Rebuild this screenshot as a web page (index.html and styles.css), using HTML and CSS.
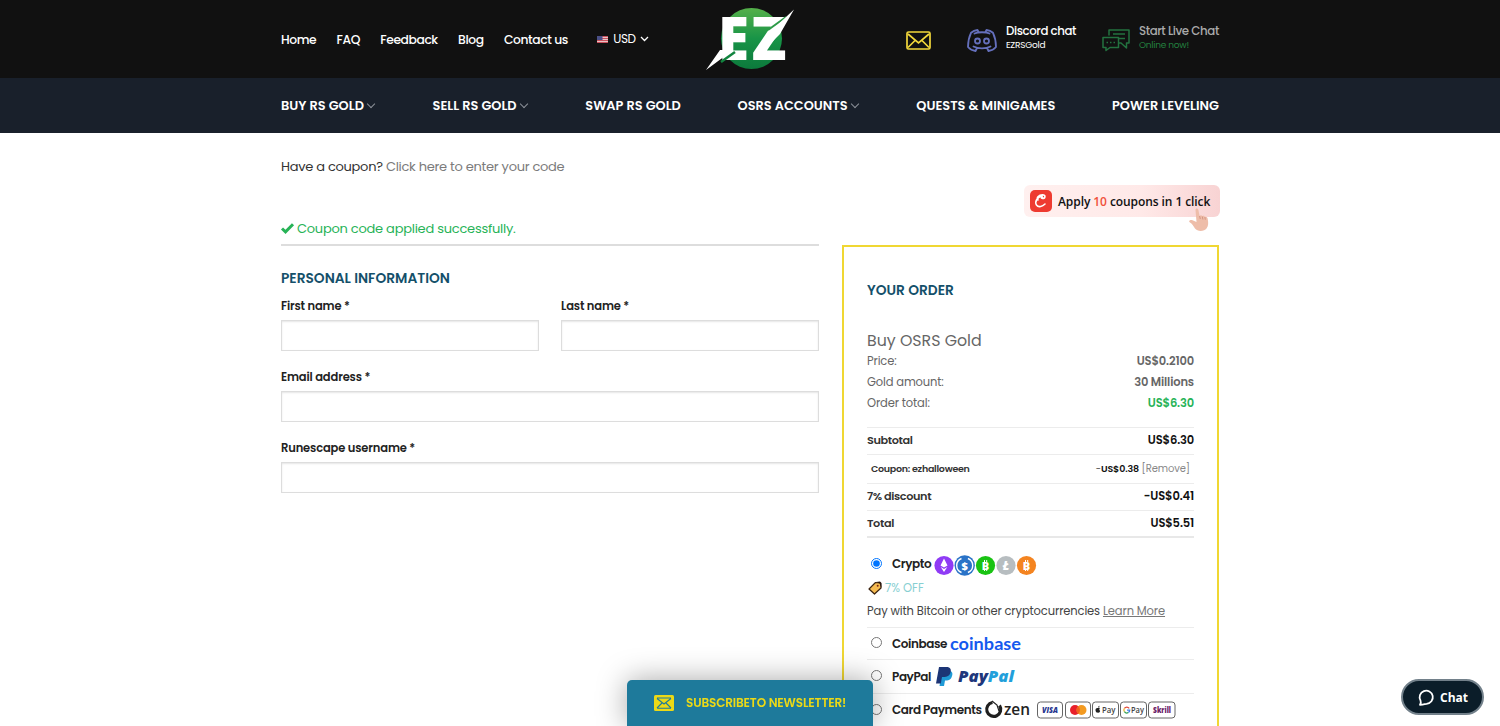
FILE: index.html
```html
<!DOCTYPE html>
<html lang="en">

<head>
    <meta charset="UTF-8">
    <meta name="viewport" content="width=device-width, initial-scale=1.0">
    <title>Checkout - EZ RS Gold</title>
    <link rel="stylesheet" href="styles.css">
</head>

<body>
    <header class="top">
        <div class="container top-row">
            <nav class="top-menu">
                <a>Home</a>
                <a>FAQ</a>
                <a>Feedback</a>
                <a>Blog</a>
                <a>Contact us</a>
                <span class="currency">
                    <svg class="flag" width="11" height="7" viewBox="0 0 11 7">
                        <rect width="11" height="7" fill="#e9c3c6" />
                        <path d="M0 .5h11M0 2.5h11M0 4.5h11M0 6.5h11" stroke="#c9505c" />
                        <rect width="5.5" height="4" fill="#4a4f86" />
                    </svg>
                    <span class="usd">USD</span>
                    <svg width="9" height="6" viewBox="0 0 9 6" fill="none" stroke="#fff" stroke-width="1.3">
                        <path d="M1 1l3.5 3.5L8 1" />
                    </svg>
                </span>
            </nav>
            <svg class="logo" width="90" height="64" viewBox="0 0 90 64">
                <defs>
                    <linearGradient id="ball" x1="0" y1="0" x2="0" y2="1">
                        <stop offset="0" stop-color="#55b04a" />
                        <stop offset=".5" stop-color="#189447" />
                        <stop offset="1" stop-color="#0c7a3c" />
                    </linearGradient>
                </defs>
                <circle cx="45.5" cy="30.5" r="30.5" fill="url(#ball)" />
                <text class="logo-text" y="52" x="12" textLength="31" lengthAdjust="spacingAndGlyphs">E</text>
                <text class="logo-text" y="52" x="45.5" textLength="35" lengthAdjust="spacingAndGlyphs">Z</text>
                <path d="M80 9L62 22" stroke="#2b9a47" stroke-width="2" />
                <path d="M15 54l14-10" stroke="#12843f" stroke-width="2.500" />
                <path d="M88 1.500L74 26l-12 12 2-14z M0 62l14-20h9l-4 6z" fill="#fff" />
            </svg>
            <div class="contacts">
                <svg class="mail" width="25" height="19" viewBox="0 0 25 19" fill="none" stroke="#f2d83b" stroke-width="1.7">
                    <rect x="1" y="1" width="23" height="17" rx="1.5" />
                    <path d="M2 3l10.500 9L23 3M2 16.500l7-7M23 16.500l-7-7" />
                </svg>
                <div class="contact discord">
                    <svg width="30" height="23" viewBox="0 0 30 23" fill="none" stroke="#6570bd" stroke-width="1.8" stroke-linecap="round" stroke-linejoin="round">
                        <path d="M7.500 4.500C11 2.800 19 2.800 22.500 4.500M11.500 3L10.500 1C7.500 1.300 5.500 2.500 4 3.800 2 8 1 13 1 18c2 2.300 5 3.700 7.500 4l1.500-3M18.500 3l1-2c3 .3 5 1.500 6.500 2.800 2 4.200 3 9.200 3 14.200-2 2.300-5 3.700-7.500 4L20 19M6.500 17.500c4.500 2.600 12.500 2.600 17 0" />
                        <circle cx="10.5" cy="12" r="2.5" />
                        <circle cx="19.5" cy="12" r="2.5" />
                    </svg>
                    <div>
                        <b>Discord chat</b>
                        <small>EZRSGold</small>
                    </div>
                </div>
                <div class="contact live">
                    <svg width="28" height="22" viewBox="0 0 28 22" fill="none" stroke="#23723f" stroke-width="1.5" stroke-linejoin="round">
                        <path d="M7 6.500V1h20v13h-2.500v5L19 14h-2M11 5h12M17 9.500h6" />
                        <path d="M1 8.500h15.500v10H8l-4 3v-3H1z" />
                        <path d="M4.500 13.500h9" stroke-dasharray="1.5 2" />
                    </svg>
                    <div>
                        <b>Start Live Chat</b>
                        <small>Online now!</small>
                    </div>
                </div>
            </div>
        </div>
    </header>

    <nav class="main-menu">
        <div class="container main-row">
            <a class="drop">BUY RS GOLD</a>
            <a class="drop">SELL RS GOLD</a>
            <a>SWAP RS GOLD</a>
            <a class="drop">OSRS ACCOUNTS</a>
            <a>QUESTS &amp; MINIGAMES</a>
            <a>POWER LEVELING</a>
        </div>
    </nav>

    <main class="container">
        <p class="have-coupon">Have a coupon? <a>Click here to enter your code</a></p>

        <div class="columns">
            <form class="billing">
                <p class="message">
                    <svg width="13" height="11" viewBox="0 0 13 11" fill="none" stroke="#27b357" stroke-width="3">
                        <path d="M1 5.500l3.500 3.300L12 1.300" />
                    </svg>
                    <span>Coupon code applied successfully.</span>
                </p>
                <h3>PERSONAL INFORMATION</h3>
                <div class="fields">
                    <label class="half"><span>First name *</span><input type="text"></label>
                    <label class="half"><span>Last name *</span><input type="text"></label>
                    <label><span>Email address *</span><input type="text"></label>
                    <label><span>Runescape username *</span><input type="text"></label>
                </div>
            </form>

            <aside class="side">
                <div class="apply">
                    <span class="apply-icon">
                        <svg width="16" height="16" viewBox="0 0 16 16" fill="none" stroke="#fff" stroke-width="1.6" stroke-linecap="round">
                            <path d="M5 7C3 4.500 6 2 9.500 1.800 13 1.800 12.500 5.500 9.500 5.500 8 5.500 8.300 3.800 9.300 4M9 3C4 4 1.500 9 3.500 12c2 2.800 6 1.500 8.500-1" />
                        </svg>
                    </span>
                    <span class="apply-text">Apply <i>10</i> coupons in 1 click</span>
                    <svg class="hand" width="24" height="25" viewBox="0 0 24 25">
                        <path d="M7.500 2c0-2 2.500-2 2.900 0l1.200 6c1-1.200 2.300-.8 2.700.3 1-.9 2.300-.5 2.600.7 1.500-.8 2.600.2 2.800 2 .8 4 .8 7-1.200 9.500-2 3-9 3.500-11.500 0C5.500 18 4 15.500 2 14.500c-2-1 0-3.200 2.500-2.200l4 1.700z" fill="#eebda9" />
                        <path d="M11.600 8l.7 3M14.300 8.500l.6 3M16.900 9l.4 2.700" stroke="#cf8b7a" stroke-width=".8" fill="none" />
                    </svg>
                </div>

                <section class="order">
                    <h3>YOUR ORDER</h3>
                    <h4>Buy OSRS Gold</h4>
                    <div class="line"><span>Price:</span><b>US$0.2100</b></div>
                    <div class="line"><span>Gold amount:</span><b>30 Millions</b></div>
                    <div class="line"><span>Order total:</span><b class="green">US$6.30</b></div>

                    <div class="totals">
                        <div class="total-row"><b>Subtotal</b><strong>US$6.30</strong></div>
                        <div class="total-row coupon"><b>Coupon: ezhalloween</b><span>-<strong>US$0.38</strong> <a>[Remove]</a></span></div>
                        <div class="total-row"><b>7% discount</b><strong>-US$0.41</strong></div>
                        <div class="total-row"><b>Total</b><strong>US$5.51</strong></div>
                    </div>

                    <div class="pay crypto">
                        <input type="radio" name="pay" checked>
                        <b>Crypto</b>
                        <svg class="coins" width="104" height="21" viewBox="0 0 104 21">
                            <circle cx="10" cy="10.5" r="9.6" fill="#8f3bf5" />
                            <path d="M10 3.500l3.500 7-3.500 2-3.500-2zM6.700 12l3.300 2 3.300-2-3.300 5z" fill="#fff" />
                            <circle cx="30.7" cy="10.5" r="10.2" fill="#2a73c7" />
                            <path d="M27.500 3.500a7.500 7.500 0 0 0 0 14M33.900 3.500a7.500 7.500 0 0 1 0 14" fill="none" stroke="#fff" stroke-width="1.4" />
                            <text x="30.7" y="14.5" font-size="11">$</text>
                            <circle cx="51.5" cy="10.5" r="9.6" fill="#19c313" />
                            <text x="51.5" y="14.5" font-size="11">B</text>
                            <path d="M50.500 5v2M52.700 5v2M50.500 14v2M52.700 14v2" stroke="#fff" />
                            <circle cx="72" cy="10.5" r="9.6" fill="#b7bdc0" />
                            <text x="72" y="14.8" font-size="12" font-style="italic">Ł</text>
                            <circle cx="92.5" cy="10.5" r="9.6" fill="#f48420" />
                            <text x="92.5" y="14.5" font-size="11">B</text>
                            <path d="M91.500 5v2M93.700 5v2M91.500 14v2M93.700 14v2" stroke="#fff" />
                        </svg>
                    </div>
                    <div class="off">
                        <svg width="14" height="14" viewBox="0 0 14 14">
                            <path d="M7.500 1.500l5 .5.5 5-6.500 6L1 8z" fill="#f5bb51" stroke="#3c2411" stroke-width="1.2" stroke-linejoin="round" />
                            <path d="M8 1l4-.5 1.500 1.500v5l-1.800-4.500z" fill="#2a1710" />
                            <circle cx="9.7" cy="4.7" r="1" fill="#7a2b16" />
                        </svg>
                        <span>7% OFF</span>
                    </div>
                    <p class="pay-note">Pay with Bitcoin or other cryptocurrencies <a>Learn More</a></p>

                    <div class="pay ruled coinbase-row">
                        <input type="radio" name="pay">
                        <b>Coinbase</b>
                        <svg class="brand" width="72" height="20" viewBox="0 0 72 20">
                            <text class="coinbase" x="0" y="16" textLength="71" lengthAdjust="spacingAndGlyphs">coinbase</text>
                        </svg>
                    </div>
                    <div class="pay ruled paypal-row">
                        <input type="radio" name="pay">
                        <b>PayPal</b>
                        <svg class="brand paypal-brand" width="80" height="21" viewBox="0 0 80 21">
                            <path d="M6 5h7c3 0 4 2 3 5-1 3.500-3 4.500-6 4.500H9L8 20H3.500z" fill="#1f9ad6" />
                            <path d="M3 1h7.500c4 0 5 2.500 4 5.500-1 3.500-3.500 4.500-7 4.500H6l-1.200 6.500H0z" fill="#1c3576" />
                            <text class="paypal" x="22" y="16" textLength="56" lengthAdjust="spacingAndGlyphs"><tspan fill="#20367b">Pay</tspan><tspan fill="#229fdb">Pal</tspan></text>
                        </svg>
                    </div>
                    <div class="pay ruled card-row">
                        <input type="radio" name="pay">
                        <b>Card Payments</b>
                        <svg class="brand zen-brand" width="192" height="20" viewBox="0 0 192 20">
                            <path d="M7.500 2.500a7 7 0 1 0 7 3" fill="none" stroke="#1f1f1f" stroke-width="3.2" />
                            <path d="M7 1l5 4 2 6" fill="none" stroke="#1f1f1f" stroke-width="1.2" />
                            <text class="zen" x="19" y="15" textLength="26" lengthAdjust="spacingAndGlyphs">zen</text>
                            <g class="cards">
                                <rect x="52.5" y="2" width="25" height="16" rx="3" />
                                <rect x="80.5" y="2" width="25" height="16" rx="3" />
                                <rect x="107.5" y="2" width="26" height="16" rx="3" />
                                <rect x="135.5" y="2" width="26" height="16" rx="3" />
                                <rect x="163.5" y="2" width="26.5" height="16" rx="3" />
                            </g>
                            <text class="visa" x="57" y="13" textLength="16" lengthAdjust="spacingAndGlyphs">VISA</text>
                            <circle cx="90" cy="10" r="5" fill="#e8202b" />
                            <circle cx="96.5" cy="10" r="5" fill="#f39a20" />
                            <path d="M93.200 6.200a5 5 0 0 1 0 7.600 5 5 0 0 1 0-7.600z" fill="#f2601f" />
                            <path d="M113 8c1-.5 1.700-.2 2 .1-1 .8-.8 2.300.2 2.800-.6 1.500-1.200 2-2.300 1.700-1.500.4-2.400-1-2.400-2.600s1.200-2.400 2.500-2zm.2-.6c0-1 .6-1.500 1.300-1.700 0 1-.5 1.600-1.300 1.700z" fill="#222" />
                            <text class="wallet" x="117" y="12.8" textLength="13.5" lengthAdjust="spacingAndGlyphs">Pay</text>
                            <g fill="none" stroke-width="1.3">
                                <path d="M144.200 8.300a2.900 2.900 0 0 0-4.800 0" stroke="#e04a3a" />
                                <path d="M139.400 8.300a3 3 0 0 0 0 3.400" stroke="#efb62d" />
                                <path d="M139.400 11.700a2.900 2.900 0 0 0 4 .7" stroke="#3ba457" />
                                <path d="M143.400 12.400c1-.5 1.300-1.200 1.300-2.200H142" stroke="#4180e8" />
                            </g>
                            <text class="wallet" x="146" y="12.8" textLength="13" lengthAdjust="spacingAndGlyphs">Pay</text>
                            <text class="skrill" x="168" y="13" textLength="18" lengthAdjust="spacingAndGlyphs">Skrill</text>
                        </svg>
                    </div>
                </section>
            </aside>
        </div>
    </main>

    <div class="subscribe">
        <svg width="20" height="16" viewBox="0 0 20 16">
            <rect width="20" height="16" rx="1.5" fill="#ecd916" />
            <path d="M3 3.500l7 5.500 7-5.500M3 13l5-5M17 13l-5-5M3 3h14M3 13.300h14" fill="none" stroke="#1e7a9b" stroke-width="1.1" />
        </svg>
        <span>SUBSCRIBETO NEWSLETTER!</span>
    </div>

    <div class="chat">
        <svg width="16" height="17" viewBox="0 0 16 17" fill="none" stroke="#fff" stroke-width="1.8" stroke-linejoin="round">
            <path d="M2.500 11.500A6.600 6.600 0 1 1 8.500 14.800c-1.500 0-2 .6-6.500 1 1-1.600 1.200-2.700.5-4.300z" />
        </svg>
        <span>Chat</span>
    </div>
</body>

</html>
```
FILE: styles.css
```css
* {
    box-sizing: border-box;
}

body {
    display: flex;
    flex-direction: column;
    margin: 0;
    height: 726px;
    overflow: hidden;
    background: #fff;
    color: #333;
    font-family: 'Poppins', 'Inter', 'Liberation Sans', sans-serif;
    font-size: 12px;
}

h3, h4, p {
    margin: 0;
}

a, span, b, strong, small, h3, h4, p {
    white-space: nowrap;
}

svg {
    flex: none;
    overflow: visible;
    letter-spacing: 0;
}

.container {
    width: 938px;
    margin: 0 auto;
}

/* header */
.top {
    flex: none;
    height: 78px;
    background: #111;
    color: #fff;
}

.top-row {
    display: flex;
    height: 78px;
}

.top-menu {
    display: flex;
    align-items: center;
    gap: 20.3px;
    width: 425px;
    padding-top: 1px;
    font-size: 12.3px;
    font-weight: 500;
    letter-spacing: -.4px;
}

.currency {
    display: flex;
    align-items: center;
    margin-left: 9px;
    padding-bottom: 1px;
    font-size: 12px;
    font-weight: 400;
}

.usd {
    margin: 0 4px 0 5px;
}

.logo {
    margin-top: 8px;
}

.logo-text {
    font-family: 'Open Sans', sans-serif;
    font-size: 60px;
    font-weight: 800;
    fill: #fff;
}

.contacts {
    display: flex;
    flex: 1;
    justify-content: flex-end;
}

.mail {
    margin: 31px 36px 0 0;
}

.contact {
    display: flex;
    padding-top: 24px;
}

.contact svg {
    margin: 5px 9px 0 0;
}

.contact b, .contact small {
    display: block;
    line-height: 15px;
}

.contact b {
    font-size: 11.8px;
    font-weight: 500;
    letter-spacing: -.42px;
}

.contact small {
    font-size: 9px;
    letter-spacing: -.25px;
    line-height: 13px;
}

.discord {
    width: 135px;
}

.live {
    width: 117px;
    color: #aaa;
}

.live small {
    color: #23803f;
}

.main-menu {
    flex: none;
    height: 55px;
    background: #19202b;
}

.main-row {
    display: flex;
    justify-content: space-between;
    align-items: center;
    height: 55px;
    color: #fff;
    font-size: 12.9px;
    font-weight: 600;
}

.drop::after {
    content: '';
    display: inline-block;
    width: 5px;
    height: 5px;
    margin: 0 2px 3px 4px;
    border: solid #8b9098;
    border-width: 0 1.5px 1.5px 0;
    transform: rotate(45deg);
}

/* checkout */
main {
    flex: 1;
    min-height: 0;
}

.have-coupon {
    padding-top: 22px;
    height: 52px;
    font-size: 13px;
    letter-spacing: -.28px;
    line-height: 24px;
}

.have-coupon a {
    color: #7b7b7b;
}

.columns {
    display: flex;
    justify-content: space-between;
}

.billing {
    width: 538px;
    padding-top: 32px;
}

.message {
    display: flex;
    align-items: center;
    gap: 3px;
    height: 29px;
    padding-bottom: 4px;
    border-bottom: 2px solid #ddd;
    color: #27b357;
    font-size: 13px;
    letter-spacing: -.25px;
}

h3 {
    color: #14506a;
    font-size: 13.75px;
    font-weight: 600;
    line-height: 20px;
}

.billing h3 {
    margin-top: 23px;
}

.fields {
    display: flex;
    flex-wrap: wrap;
    column-gap: 22px;
    padding-top: 7px;
}

.fields label {
    width: 100%;
    height: 71px;
    color: #222;
    font-size: 11.5px;
    font-weight: 600;
    letter-spacing: -.15px;
}

.fields .half {
    width: 258px;
}

.fields label span {
    display: block;
    height: 24px;
    line-height: 21px;
}

.fields input {
    display: block;
    width: 100%;
    height: 31px;
    border: 1px solid #ddd;
    box-shadow: inset 0 1px 2px rgba(0, 0, 0, .1);
}

.side {
    width: 377px;
}

.apply {
    position: relative;
    display: flex;
    align-items: center;
    width: 196px;
    height: 32px;
    margin: 0 -1px 28px auto;
    padding-left: 6px;
    border-radius: 6px;
    background: linear-gradient(90deg, #fff0ef, #ffe9e8 60%, #f8d3d3);
    color: #111;
    font-family: 'Open Sans', sans-serif;
    font-size: 12px;
    font-weight: 600;
    letter-spacing: -.08px;
}

.apply i {
    color: #f0503a;
    font-style: normal;
}

.apply-icon {
    width: 22px;
    height: 22px;
    margin-right: 6px;
    padding: 3px;
    border-radius: 5px;
    background: #ee3b31;
}

.hand {
    position: absolute;
    right: 8px;
    top: 23px;
}

.order {
    height: 481px;
    overflow: hidden;
    padding: 34px 23px 0;
    border: 2px solid #f0d733;
    border-bottom: 0;
}

.order h4 {
    margin-top: 30px;
    color: #666;
    font-size: 15.8px;
    font-weight: 400;
    line-height: 20px;
}

.line {
    display: flex;
    justify-content: space-between;
    color: #666;
    font-size: 11.5px;
    letter-spacing: -.14px;
    line-height: 21px;
}

.line b {
    font-weight: 600;
}

.line .green {
    color: #27b357;
}

.totals {
    margin-top: 13px;
    border-bottom: 2px solid #e8e8e8;
}

.total-row {
    display: flex;
    justify-content: space-between;
    height: 27px;
    border-top: 1px solid #ececec;
    color: #333;
    font-size: 11.5px;
    line-height: 24px;
}

.total-row:last-child {
    height: 26px;
}

.total-row b {
    font-size: 11.3px;
    font-weight: 600;
    letter-spacing: -.4px;
}

.total-row strong {
    color: #111;
    font-weight: 600;
    letter-spacing: -.15px;
}

.coupon {
    height: 29px;
    padding: 0 4px;
    font-size: 9.5px;
    line-height: 27px;
}

.coupon b {
    font-size: 9.5px;
    letter-spacing: -.27px;
}

.coupon a {
    color: #888;
    font-size: 10px;
    letter-spacing: -.1px;
}

.pay {
    display: flex;
    align-items: center;
    height: 33px;
    color: #222;
    font-size: 12px;
}

.pay b {
    font-weight: 600;
    letter-spacing: -.42px;
}

.pay input {
    width: 11px;
    height: 11px;
    margin: 0 10px 2px 4px;
}

.ruled {
    border-top: 1px solid #ececec;
}

.crypto {
    height: 24px;
    margin-top: 14px;
}

.coins {
    margin: 3px 0 0 3px;
}

.coins text {
    fill: #fff;
    font-family: 'Open Sans', sans-serif;
    font-weight: 800;
    text-anchor: middle;
}

.off {
    display: flex;
    align-items: center;
    gap: 3px;
    height: 24px;
    padding-left: 1px;
    color: #87cfd2;
    font-size: 11.5px;
}

.pay-note {
    height: 27px;
    color: #444;
    font-size: 11.5px;
    letter-spacing: -.12px;
    line-height: 23px;
}

.pay-note a {
    color: #777;
    text-decoration: underline;
}

.brand {
    margin: 0 0 0 3px;
}

.coinbase-row {
    height: 32px;
}

.coinbase {
    fill: #1459ee;
    font-family: 'Lato', sans-serif;
    font-size: 17.5px;
    font-weight: 700;
}

.paypal-row {
    height: 34px;
}

.paypal {
    font-family: 'Open Sans', sans-serif;
    font-size: 16px;
    font-style: italic;
    font-weight: 800;
}

.paypal-brand {
    margin-left: 5px;
}

.zen {
    fill: #222;
    font-family: 'Open Sans', sans-serif;
    font-size: 17px;
    font-weight: 600;
}

.cards rect {
    fill: #fff;
    stroke: #666;
}

.visa, .skrill {
    fill: #26368f;
    font-family: 'Open Sans', sans-serif;
    font-size: 8px;
    font-weight: 800;
}

.visa {
    font-style: italic;
}

.skrill {
    fill: #6b2065;
}

.wallet {
    fill: #444;
    font-family: 'Open Sans', sans-serif;
    font-size: 8.5px;
    font-weight: 600;
}

/* floating buttons */
.subscribe {
    position: fixed;
    left: 627px;
    bottom: 0;
    display: flex;
    align-items: center;
    width: 246px;
    height: 46px;
    padding-left: 27px;
    border-radius: 5px 5px 0 0;
    background: #1e7a9b;
    box-shadow: 0 0 30px rgba(0, 0, 0, .35);
    color: #ecd916;
    font-size: 12px;
    font-weight: 600;
    letter-spacing: -.13px;
}

.subscribe span {
    margin-left: 12px;
}

.chat {
    position: fixed;
    right: 16px;
    bottom: 11px;
    display: flex;
    align-items: center;
    width: 83px;
    height: 36px;
    padding-left: 15px;
    border: 2px solid #72808a;
    border-radius: 18px;
    background: #0b1d29;
    color: #fff;
    font-family: 'Open Sans', sans-serif;
    font-size: 12px;
    font-weight: 700;
}

.chat span {
    margin-left: 6px;
}
```
